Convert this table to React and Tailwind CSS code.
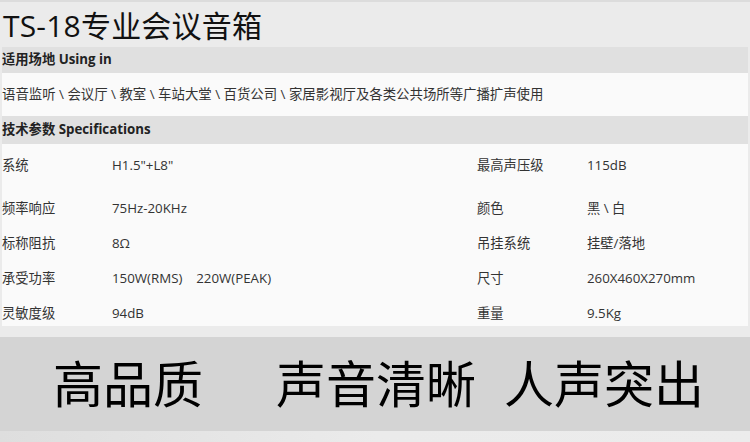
import React from 'react';

const font = { fontFamily: '"Open Sans", "Noto Sans CJK SC", sans-serif' };

const specs = [
  ['系统', 'H1.5"+L8"', '最高声压级', '115dB'],
  ['频率响应', '75Hz-20KHz', '颜色', '黑 \\ 白'],
  ['标称阻抗', '8Ω', '吊挂系统', '挂壁/落地'],
  ['承受功率', '150W(RMS)\u00a0\u00a0\u00a0\u00a0220W(PEAK)', '尺寸', '260X460X270mm'],
  ['灵敏度级', '94dB', '重量', '9.5Kg'],
];

export default function App() {
  return (
    <div className="w-[750px] h-[442px] bg-[#ebebeb] flex flex-col overflow-hidden" style={font}>

      {/* 标题 */}
      <div className="h-[2px] bg-[#dcdcdc]" />
      <div className="h-[45px] flex items-end pl-[3px] pb-[1px]">
        <h1 className="text-[30px] leading-[40px] text-[#111] tracking-[0.2px]">TS-18专业会议音箱</h1>
      </div>

      <div className="mx-[2px] flex flex-col">
        {/* 适用场地 */}
        <div className="h-[26px] bg-[#e0e0e0] flex items-center">
          <h2 className="text-[13.3px] font-bold text-[#222]">适用场地 Using in</h2>
        </div>
        <div className="h-[43px] bg-[#fafafa] flex items-center">
          <p className="text-[13.4px] text-[#333]">
            语音监听 \ 会议厅 \ 教室 \ 车站大堂 \ 百货公司 \ 家居影视厅及各类公共场所等广播扩声使用
          </p>
        </div>

        {/* 技术参数 */}
        <div className="h-[28px] bg-[#e0e0e0] flex items-center">
          <h2 className="text-[13.3px] font-bold text-[#222]">技术参数 Specifications</h2>
        </div>
        <div className="h-[182px] bg-[#fafafa] pt-[4px] overflow-hidden">
          {specs.map((row, i) => (
            <div
              key={row[0]}
              className={`h-[35px] grid grid-cols-[110px_365px_110px_1fr] items-center text-[13.3px] text-[#333] ${i === 0 ? 'mb-[8px]' : ''}`}
            >
              <span>{row[0]}</span>
              <span>{row[1]}</span>
              <span>{row[2]}</span>
              <span>{row[3]}</span>
            </div>
          ))}
        </div>
      </div>

      {/* 宣传语 */}
      <div className="mt-[11px] h-[94px] bg-[#d4d4d4] flex items-center pl-[53px]">
        <span className="text-[50px] leading-none text-black mr-[73px]">高品质</span>
        <span className="text-[50px] leading-none text-black mr-[28px]">声音清晰</span>
        <span className="text-[50px] leading-none text-black">人声突出</span>
      </div>
      <div className="flex-1 bg-gradient-to-r from-[#dedede] via-[#ebebeb] to-[#ececec]" />
    </div>
  );
}
